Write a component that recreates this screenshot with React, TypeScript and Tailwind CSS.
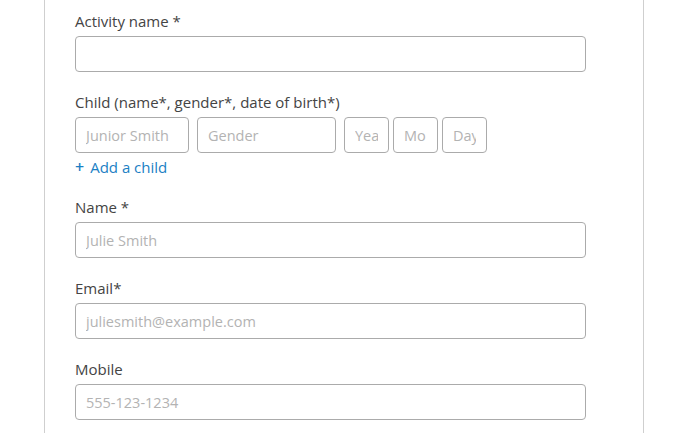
import React from 'react';

const inputClasses =
  "h-9 rounded-[4px] border border-[#ababab] bg-white px-[10px] text-[14.5px] text-[#333] placeholder:text-[#b3b3b3] outline-none";

const labelClasses = "h-[22px] leading-[22px] text-[15px] text-[#444]";

const Field: React.FC<{ label: string; placeholder?: string }> = ({ label, placeholder }) => (
  <div className="flex flex-col gap-1">
    <label className={labelClasses}>{label}</label>
    <input className={`${inputClasses} w-[511px]`} placeholder={placeholder} />
  </div>
);

export default function App() {
  return (
    <div className="min-h-screen bg-white" style={{ fontFamily: '"Open Sans", "Noto Sans", sans-serif' }}>
      <div className="ml-[44px] w-[600px] min-h-[433px] border-x border-[#cfcfcf] pl-[30px] pt-[10px]">
        <div className="flex flex-col gap-[19px]">
          <Field label="Activity name *" />

          <div className="flex flex-col">
            <div className="flex flex-col gap-1">
              <label className={labelClasses}>Child (name*, gender*, date of birth*)</label>
              <div className="flex items-center">
                <input className={`${inputClasses} w-[114px]`} placeholder="Junior Smith" />
                <input className={`${inputClasses} ml-2 w-[139px]`} placeholder="Gender" />
                <input className={`${inputClasses} ml-2 w-[45px]`} placeholder="Yea" />
                <input className={`${inputClasses} ml-1 w-[45px]`} placeholder="Mo" />
                <input className={`${inputClasses} ml-1 w-[45px]`} placeholder="Day" />
              </div>
            </div>
            <a href="#" className="mt-[3px] flex h-[22px] items-center gap-[6px] text-[15px] leading-[22px] text-[#1a80c4]">
              <span className="text-[16px] font-semibold">+</span>
              <span>Add a child</span>
            </a>
          </div>

          <div className="-mt-[1px]">
            <Field label="Name *" placeholder="Julie Smith" />
          </div>
          <Field label="Email*" placeholder="juliesmith@example.com" />
          <Field label="Mobile" placeholder="555-123-1234" />
        </div>
      </div>
    </div>
  );
}
